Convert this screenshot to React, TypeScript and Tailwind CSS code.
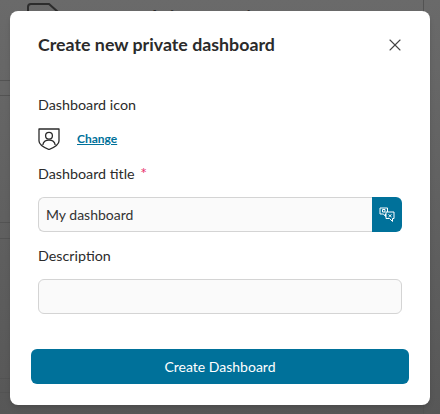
import React from 'react';
import { X } from 'lucide-react';

const font = "font-['Lato','Roboto',sans-serif]";

const ShieldUser = () => (
  <svg width="22" height="22" viewBox="0 0 22 22" fill="none" stroke="#2b2b2b" strokeWidth="1.3">
    <path d="M1 1h20v12c0 4-5 6.500-10 8.500c-5-2-10-4.500-10-8.500z" strokeLinejoin="round" />
    <circle cx="11" cy="7.800" r="3.400" />
    <path d="M4.800 17c.5-3 3-4.800 6.200-4.800s5.700 1.800 6.200 4.800" />
  </svg>
);

const TranslateIcon = () => (
  <svg width="16" height="16" viewBox="0 0 16 16" fill="none" stroke="#ffffff" strokeWidth="1">
    <path d="M1 1h7.500v6H6.500v2.500L4.500 7H1z" />
    <path d="M3.500 2.500h2.500v2.500h-2.500z" />
    <path d="M7 5h8v6.500h-1.500v3l-3-3H7z" fill="#00719a" />
    <path d="M9.500 7.500l3 2.500M12.500 7.500l-3 2.500" />
  </svg>
);

// faint rows of the page behind the scrim
const BackdropCard = ({ top, height }: { top: number; height: number }) => (
  <div
    className="absolute left-[-20px] w-[444px] rounded-[8px] border border-[#535353]"
    style={{ top, height }}
  />
);

export default function App() {
  return (
    <div className={`relative h-[414px] w-[440px] overflow-hidden bg-gradient-to-b from-[#6a6a6a] to-[#575757] ${font}`}>
      <BackdropCard top={-60} height={141} />
      <BackdropCard top={95} height={128} />
      <BackdropCard top={238} height={141} />
      <BackdropCard top={392} height={100} />
      <svg className="absolute left-[27px] top-[3px]" width="32" height="22" viewBox="0 0 32 22" fill="none" stroke="#2c2c2c" strokeWidth="2">
        <path d="M1 20V4a3 3 0 0 1 3-3h18l9 8v11" />
      </svg>
      <div className="absolute left-[98px] top-[6px] text-[20px] font-bold leading-[24px] text-[#2c2c2c]">Default information</div>
      <div className="absolute left-[10px] top-[11px] flex h-[394px] w-[420px] flex-col rounded-[8px] bg-white px-[28px] pt-[20px] shadow-md">
        <div className="flex items-center justify-between">
          <h2 className="text-[17.8px] font-bold leading-[26px] text-[#2b2b2b]">Create new private dashboard</h2>
          <X size={20} strokeWidth={1.3} className="mr-[-3px] mt-[2px] text-[#444444]" />
        </div>
        <div className="mt-[38px] text-[14.300px] leading-[20px] text-[#2b2b2b]">Dashboard icon</div>
        <div className="mt-[13px] flex items-center gap-[17px]">
          <ShieldUser />
          <a className="text-[12px] font-bold leading-[16px] text-[#00719a] underline">Change</a>
        </div>
        <div className="mt-[14px] text-[14.300px] leading-[20px] text-[#2b2b2b]">
          Dashboard title <span className="ml-[2px] text-[16px] leading-[16px] text-[#e8336d]">*</span>
        </div>
        <div className="mt-[13px] flex h-[35px]">
          <div className="flex flex-1 items-center rounded-l-[6px] border border-r-0 border-[#d4d4d4] bg-[#fafafa] px-[7px] text-[14px] text-[#333333]">My dashboard</div>
          <div className="flex w-[30px] items-center justify-center rounded-r-[6px] bg-[#00719a]">
            <TranslateIcon />
          </div>
        </div>
        <div className="mt-[14px] text-[14.300px] leading-[20px] text-[#2b2b2b]">Description</div>
        <div className="mt-[13px] h-[35px] rounded-[6px] border border-[#d4d4d4] bg-[#fafafa]" />
        <button className="mx-[-7px] mt-[35px] h-[35px] rounded-[6px] bg-[#00719a] text-[14px] text-white">Create Dashboard</button>
      </div>
    </div>
  );
}
